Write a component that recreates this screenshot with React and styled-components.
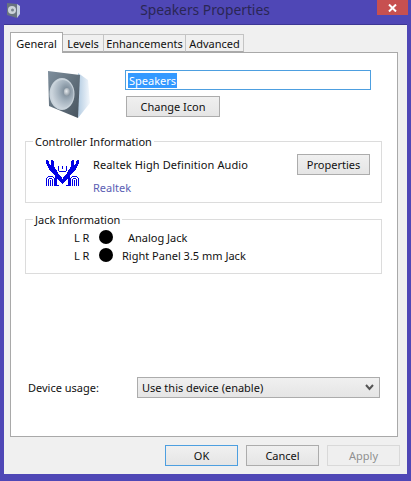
import React from "react";
import styled, { createGlobalStyle } from "styled-components";

const Global = createGlobalStyle`
  html, body { margin: 0; padding: 0; background: #4f47b6; }
  * { box-sizing: border-box; }
  body { font-family: "Noto Sans", "Open Sans", sans-serif; font-size: 11px; color: #111; }
`;

const Win = styled.div`
  width: 411px; height: 481px; background: #4f47b6;
  display: flex; flex-direction: column; position: relative; overflow: hidden;
`;
const TitleBar = styled.div`
  height: 24px; display: flex; justify-content: center; position: relative;
`;
const Title = styled.div`
  font-size: 13.8px; color: #2a2654; line-height: 20px; margin-left: -1px;
`;
const Close = styled.div`
  position: absolute; right: 3px; top: 0; width: 31px; height: 15px; background: #c75050;
  display: flex; align-items: center; justify-content: center;
`;
const SysIcon = styled.div`
  position: absolute; left: 6px; top: 3px; width: 14px; height: 15px;
`;
const Client = styled.div`
  margin: 0 4px; width: 403px; height: 450px; background: #f0f0f0;
  border-top: 1px solid #3d3794; padding: 7px 0 0 6px;
`;
const Tabs = styled.div`
  display: flex; align-items: flex-end; height: 20px; position: relative; z-index: 1;
`;
const Tab = styled.div`
  height: ${p => (p.$active ? 21 : 18)}px;
  width: ${p => p.$w}px;
  margin-bottom: ${p => (p.$active ? -1 : 0)}px;
  margin-left: ${p => (p.$first ? 0 : -1)}px;
  background: ${p => (p.$active ? "#fff" : "#f0f0f0")};
  border: 1px solid ${p => (p.$active ? "#aaa" : "#c4c4c4")};
  border-bottom: ${p => (p.$active ? "none" : "1px solid #aaa")};
  z-index: ${p => (p.$active ? 2 : 1)};
  display: flex; align-items: center; justify-content: center; color: #111;
`;
const Panel = styled.div`
  width: 388px; height: 385px; background: #fff; border: 1px solid #a9a9a9; padding-top: 17px;
`;
const Head = styled.div`
  display: flex; height: 48px; padding-left: 37px;
`;
const HeadFields = styled.div`
  margin-left: 34px; display: flex; flex-direction: column; gap: 6px; align-items: flex-start;
`;
const NameBox = styled.div`
  width: 246px; height: 20px; border: 1px solid #4d9fe0; padding: 2px 0 0 2px; margin-left: -1px;
  display: flex; align-items: flex-start; background: #fff;
`;
const Selected = styled.span`
  background: #3399ff; color: #fff; line-height: 15px; height: 15px; padding: 0 1px;
`;
const Btn = styled.div`
  width: ${p => p.$w}px; height: 21px;
  border: 1px solid ${p => (p.$disabled ? "#d9d9d9" : p.$focus ? "#4d9fe0" : "#acacac")};
  color: ${p => (p.$disabled ? "#8f8f8f" : "#111")};
  background: ${p => (p.$disabled ? "#efefef" : "linear-gradient(#f0f0f0, #e5e5e5)")};
  display: flex; align-items: center; justify-content: center; flex: none;
`;
const Group = styled.fieldset`
  margin: ${p => p.$top}px 15px 0 14px; padding: 0; height: ${p => p.$h}px;
  border: 1px solid #dcdcdc; min-width: 0;
`;
const Legend = styled.legend`
  margin-left: 7px; padding: 0 2px; line-height: 16px; color: #111; position: relative; top: 1px;
`;
const ControllerRow = styled.div`
  display: flex; padding: 5px 11px 0 20px;
`;
const LogoSlot = styled.div`
  width: 47px; height: 40px; flex: none; margin-top: 5px;
`;
const Driver = styled.div`
  flex: 1; display: flex; flex-direction: column; gap: 8px; padding-top: 3px;
`;
const DriverLine = styled.div`
  line-height: 15px; letter-spacing: ${p => (p.$link ? 0 : 0.1)}px;
  color: ${p => (p.$link ? "#5b60b4" : "#111")};
`;
const JackList = styled.div`
  display: flex; flex-direction: column; padding-top: 1px;
`;
const JackRow = styled.div`
  display: flex; align-items: center; height: 18px; padding-left: 48px;
`;
const Channels = styled.span`
  width: 25px; flex: none;
`;
const Dot = styled.span`
  width: 14px; height: 14px; border-radius: 50%; background: #000; flex: none;
`;
const JackLabel = styled.span`
  margin-left: ${p => p.$indent}px;
`;
const UsageRow = styled.div`
  display: flex; align-items: center; margin-top: 103px; padding-left: 17px; height: 21px;
`;
const UsageLabel = styled.span`
  width: 109px; flex: none;
`;
const Select = styled.div`
  width: 243px; height: 21px; border: 1px solid #acacac; background: linear-gradient(#f0f0f0, #e5e5e5);
  display: flex; align-items: center; justify-content: space-between; padding: 0 5px 0 4px;
`;
const Footer = styled.div`
  display: flex; gap: 8px; margin: 8px 0 0 155px;
`;

const SpeakerIcon = ({ size = 44 }) => (
  <svg width={size} height={size * 50 / 44} viewBox="0 0 44 50" style={{ flex: "none" }}>
    <defs>
      <linearGradient id="face" x1="0" y1="0" x2="1" y2="1">
        <stop offset="0" stopColor="#7f8f9d" />
        <stop offset="0.5" stopColor="#62717d" />
        <stop offset="1" stopColor="#46525d" />
      </linearGradient>
      <linearGradient id="side" x1="0" y1="0" x2="1" y2="0">
        <stop offset="0" stopColor="#b4cce2" />
        <stop offset="1" stopColor="#f4f8fc" />
      </linearGradient>
      <radialGradient id="cone" cx="0.68" cy="0.4" r="0.75">
        <stop offset="0" stopColor="#6f7f8d" />
        <stop offset="0.45" stopColor="#a2b0bc" />
        <stop offset="1" stopColor="#d6dee5" />
      </radialGradient>
      <radialGradient id="cap" cx="0.4" cy="0.4" r="0.7">
        <stop offset="0" stopColor="#e8ecef" />
        <stop offset="1" stopColor="#7d8a96" />
      </radialGradient>
    </defs>
    <path d="M30 3 L40 10 L42 33 L30 48 Z" fill="url(#side)" />
    <path d="M0 1 L32 5 L30 48 L1 36 Z" fill="url(#face)" />
    <ellipse cx="14" cy="24" rx="12.5" ry="16" fill="#c9d3db" />
    <ellipse cx="14.5" cy="24" rx="11" ry="14" fill="url(#cone)" />
    <ellipse cx="19" cy="22" rx="3.2" ry="4" fill="url(#cap)" />
  </svg>
);

const SmallSpeaker = () => (
  <svg width="14" height="15" viewBox="0 0 14 15">
    <path d="M1 0 L11 1 L11 15 L1 12 Z" fill="#69747f" />
    <path d="M11 1 L14 3 L14 11 L11 15 Z" fill="#c4cee0" />
    <circle cx="6" cy="7" r="4" fill="#ccd3da" />
    <circle cx="6.5" cy="7" r="1.5" fill="#79848f" />
  </svg>
);

const LOGO_HALF = [
  ".................",
  "##...##..........",
  "###..###.........",
  "###..###.........",
  "###..###.........",
  ".###.###.........",
  ".#######.........",
  "..######....#...#",
  "..#######...#...#",
  "...######...#...#",
  "...#######..#....",
  "....#######.#....",
  ".....######..####",
  "......######.....",
  ".......#####.....",
  "........#####....",
  ".........#####...",
  "..#####..######..",
  ".#.....#.#######.",
  "#..###..########.",
  "#.#...#.###.#####",
  "#.#.#.#.###..####",
  "#.#.#.#.###...###",
  "#.#.#.#.###....##",
  "#.#.#.#.###.....#",
  "#.#.#.#.###......",
  "#.#.#.#.#####....",
  ".................",
];

const logoPath = LOGO_HALF.flatMap((row, y) =>
  [...row].flatMap((c, x) =>
    c === "#" ? [`M${x} ${y}h1v1h-1z`, x < 16 ? `M${32 - x} ${y}h1v1h-1z` : ""] : []
  )
).join("");

const RealtekLogo = () => (
  <svg width="33" height="28" viewBox="0 0 33 28" shapeRendering="crispEdges">
    <path d={logoPath} fill="#0000e6" />
  </svg>
);

export default function App() {
  return (
    <Win>
      <Global />
      <TitleBar>
        <SysIcon><SmallSpeaker /></SysIcon>
        <Title>Speakers Properties</Title>
        <Close>
          <svg width="9" height="8" viewBox="0 0 9 8">
            <path d="M1 0.5 L8 7.5 M8 0.5 L1 7.5" stroke="#fff" strokeWidth="2" />
          </svg>
        </Close>
      </TitleBar>
      <Client>
        <Tabs>
          <Tab $active $first $w={53}>General</Tab>
          <Tab $w={42}>Levels</Tab>
          <Tab $w={83}>Enhancements</Tab>
          <Tab $w={59}>Advanced</Tab>
        </Tabs>
        <Panel>
          <Head>
            <SpeakerIcon />
            <HeadFields>
              <NameBox><Selected>Speakers</Selected></NameBox>
              <Btn $w={94}>Change Icon</Btn>
            </HeadFields>
          </Head>
          <Group $top={15} $h={70}>
            <Legend>Controller Information</Legend>
            <ControllerRow>
              <LogoSlot><RealtekLogo /></LogoSlot>
              <Driver>
                <DriverLine>Realtek High Definition Audio</DriverLine>
                <DriverLine $link>Realtek</DriverLine>
              </Driver>
              <Btn $w={73}>Properties</Btn>
            </ControllerRow>
          </Group>
          <Group $top={8} $h={63}>
            <Legend>Jack Information</Legend>
            <JackList>
              <JackRow>
                <Channels>L R</Channels><Dot />
                <JackLabel $indent={15}>Analog Jack</JackLabel>
              </JackRow>
              <JackRow>
                <Channels>L R</Channels><Dot />
                <JackLabel $indent={9}>Right Panel 3.5 mm Jack</JackLabel>
              </JackRow>
            </JackList>
          </Group>
          <UsageRow>
            <UsageLabel>Device usage:</UsageLabel>
            <Select>
              <span>Use this device (enable)</span>
              <svg width="9" height="7" viewBox="0 0 9 7">
                <path d="M1 1 L4.5 5 L8 1" stroke="#555" strokeWidth="2" fill="none" />
              </svg>
            </Select>
          </UsageRow>
        </Panel>
        <Footer>
          <Btn $w={73} $focus>OK</Btn>
          <Btn $w={73}>Cancel</Btn>
          <Btn $w={73} $disabled>Apply</Btn>
        </Footer>
      </Client>
    </Win>
  );
}
